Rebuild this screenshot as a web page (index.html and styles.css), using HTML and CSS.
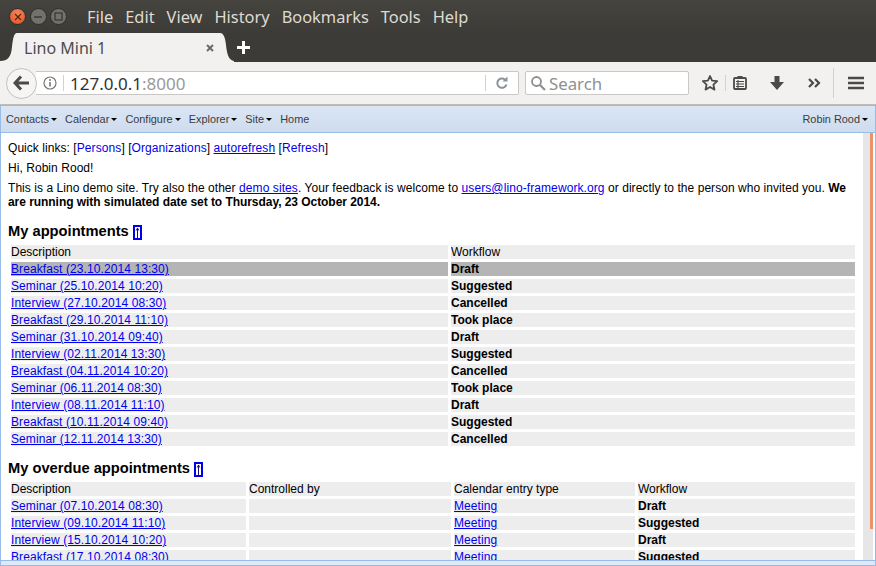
FILE: index.html
```html
<!DOCTYPE html>
<html lang="en">
<head>
<meta charset="UTF-8" />
<title>Lino Mini 1</title>
<link rel="stylesheet" href="styles.css">
</head>
<body>
<div class="titlebar">
	<div class="winbtns">
		<span class="winbtn close">
			<svg width="8" height="8" viewBox="0 0 8 8"><path d="M1 1l6 6M7 1l-6 6" stroke="#5a2412" stroke-width="1.3"/></svg>
		</span>
		<span class="winbtn">
			<svg width="8" height="8" viewBox="0 0 8 8"><path d="M0 4h8" stroke="#3a3a36" stroke-width="1.5"/></svg>
		</span>
		<span class="winbtn">
			<svg width="9" height="9" viewBox="0 0 9 9"><rect x="1" y="1" width="7" height="7" fill="none" stroke="#3a3a36" stroke-width="1.3"/></svg>
		</span>
	</div>
	<ul class="appmenu">
		<li>File</li>
		<li>Edit</li>
		<li>View</li>
		<li>History</li>
		<li>Bookmarks</li>
		<li>Tools</li>
		<li>Help</li>
	</ul>
</div>
<div class="tabstrip">
	<div class="tab">
		<svg class="flare" width="17" height="29" viewBox="0 0 17 29"><path d="M0 29V28C8 28 11 24 12 14 13 5 14 0 17 0V29z" fill="#f2f1ef"/></svg>
		<div class="tabmiddle">
			<span class="tabtitle">Lino Mini 1</span>
			<svg class="tabclose" width="8" height="8" viewBox="0 0 8 8"><path d="M1 1l6 6M7 1l-6 6" stroke="#6a6a6a" stroke-width="2"/></svg>
		</div>
		<svg class="flare" width="14" height="29" viewBox="0 0 14 29"><path d="M0 0C3 0 5 3 6 12 7 22 9 27 14 28V29H0z" fill="#f2f1ef"/></svg>
	</div>
	<svg class="newtab" width="13" height="13" viewBox="0 0 13 13"><path d="M6.500 0v13M0 6.500h13" stroke="#fff" stroke-width="3"/></svg>
</div>
<div class="navbar">
	<div class="backbtn">
		<svg width="17" height="16" viewBox="0 0 17 16"><path d="M8 1.500L2 8l6 6.500M2.500 8H16" fill="none" stroke="#4a4a4a" stroke-width="3"/></svg>
	</div>
	<div class="urlbar">
		<svg class="infoicon" width="14" height="14" viewBox="0 0 14 14"><circle cx="7" cy="7" r="6" fill="none" stroke="#777" stroke-width="1.2"/><path d="M7 6v4.500" stroke="#777" stroke-width="1.6"/><circle cx="7" cy="4" r="1" fill="#777"/></svg>
		<span class="urlsep"></span>
		<span class="url">127.0.0.1<span class="port">:8000</span></span>
		<span class="urlsep reloadsep"></span>
		<svg class="reload" width="14" height="14" viewBox="0 0 14 14"><path d="M11.500 8.500A4.700 4.700 0 1 1 10 3.500" fill="none" stroke="#8a939c" stroke-width="2"/><path d="M7.500 5.500H12.500V.5z" fill="#8a939c"/></svg>
	</div>
	<div class="searchbar">
		<svg width="16" height="16" viewBox="0 0 16 16"><circle cx="6.500" cy="6.500" r="4.500" fill="none" stroke="#8f8f8f" stroke-width="1.800"/><path d="M10 10l5 5" stroke="#8f8f8f" stroke-width="2.200"/></svg>
		<span class="searchtext">Search</span>
	</div>
	<div class="tools">
		<svg class="tool star" width="18" height="18" viewBox="0 0 18 18"><path d="M9 2l2.100 4.700 5.100.5-3.800 3.400 1.100 5L9 13l-4.500 2.600 1.100-5L1.800 7.200l5.100-.5z" fill="none" stroke="#4a4a4a" stroke-width="1.800" stroke-linejoin="round"/></svg>
		<span class="toolsep"></span>
		<svg class="tool clip" width="14" height="14" viewBox="0 0 14 14"><path d="M4.500 0h5v2h-5z" fill="#4a4a4a"/><rect x="1" y="2" width="12" height="11" rx="1" fill="none" stroke="#4a4a4a" stroke-width="1.800"/><path d="M3 5.500h8M3 8h8M3 10.500h8M5 4v8" stroke="#4a4a4a" stroke-width="1.100"/></svg>
		<svg class="tool down" width="16" height="16" viewBox="0 0 16 16"><path d="M5.500 1h5v6H15l-7 8-7-8h4.500z" fill="#4a4a4a"/></svg>
		<svg class="tool more" width="13" height="10" viewBox="0 0 13 10"><path d="M1 1l4 4-4 4M7 1l4 4-4 4" fill="none" stroke="#4a4a4a" stroke-width="2.200"/></svg>
		<span class="toolsep wide"></span>
		<svg class="tool burger" width="16" height="14" viewBox="0 0 16 14"><path d="M0 2h16M0 7h16M0 12h16" stroke="#4a4a4a" stroke-width="2.600"/></svg>
	</div>
</div>
<div class="menubar">
	<a class="menuitem arrow">Contacts</a>
	<a class="menuitem arrow">Calendar</a>
	<a class="menuitem arrow">Configure</a>
	<a class="menuitem arrow">Explorer</a>
	<a class="menuitem arrow">Site</a>
	<a class="menuitem">Home</a>
	<a class="menuitem arrow user">Robin Rood</a>
</div>
<div class="viewport">
	<div class="content">
		<p>Quick links: [<a class="plain" href="#">Persons</a>] [<a class="plain" href="#">Organizations</a>] <a href="#">autorefresh</a> [<a class="plain" href="#">Refresh</a>]</p>
		<p>Hi, Robin Rood!</p>
		<p>This is a Lino demo site. Try also the other <a href="#">demo sites</a>. Your feedback is welcome to <a href="#">users@lino-framework.org</a> or directly to the person who invited you. <b>We are running with simulated date set to Thursday, 23 October 2014.</b></p>

		<h2 class="firsthead">My appointments <a class="uplink" href="#"><svg width="5" height="11" viewBox="0 0 5 11"><path d="M2.500 11V1M1.200 3.500l1.300-2.500 1.300 2.500" fill="none" stroke="#101070" stroke-width="1"/></svg></a></h2>
		<table class="grid first">
			<tr><td class="c1">Description</td><td>Workflow</td></tr>
			<tr class="current"><td><a href="#">Breakfast (23.10.2014 13:30)</a></td><td><b>Draft</b></td></tr>
			<tr><td><a href="#">Seminar (25.10.2014 10:20)</a></td><td><b>Suggested</b></td></tr>
			<tr><td><a href="#">Interview (27.10.2014 08:30)</a></td><td><b>Cancelled</b></td></tr>
			<tr><td><a href="#">Breakfast (29.10.2014 11:10)</a></td><td><b>Took place</b></td></tr>
			<tr><td><a href="#">Seminar (31.10.2014 09:40)</a></td><td><b>Draft</b></td></tr>
			<tr><td><a href="#">Interview (02.11.2014 13:30)</a></td><td><b>Suggested</b></td></tr>
			<tr><td><a href="#">Breakfast (04.11.2014 10:20)</a></td><td><b>Cancelled</b></td></tr>
			<tr><td><a href="#">Seminar (06.11.2014 08:30)</a></td><td><b>Took place</b></td></tr>
			<tr><td><a href="#">Interview (08.11.2014 11:10)</a></td><td><b>Draft</b></td></tr>
			<tr><td><a href="#">Breakfast (10.11.2014 09:40)</a></td><td><b>Suggested</b></td></tr>
			<tr><td><a href="#">Seminar (12.11.2014 13:30)</a></td><td><b>Cancelled</b></td></tr>
		</table>

		<h2>My overdue appointments <a class="uplink" href="#"><svg width="5" height="11" viewBox="0 0 5 11"><path d="M2.500 11V1M1.200 3.500l1.300-2.500 1.300 2.500" fill="none" stroke="#101070" stroke-width="1"/></svg></a></h2>
		<table class="grid second">
			<tr><td class="c1">Description</td><td class="c2">Controlled by</td><td class="c3">Calendar entry type</td><td>Workflow</td></tr>
			<tr><td><a href="#">Seminar (07.10.2014 08:30)</a></td><td></td><td><a href="#">Meeting</a></td><td><b>Draft</b></td></tr>
			<tr><td><a href="#">Interview (09.10.2014 11:10)</a></td><td></td><td><a href="#">Meeting</a></td><td><b>Suggested</b></td></tr>
			<tr><td><a href="#">Interview (15.10.2014 10:20)</a></td><td></td><td><a href="#">Meeting</a></td><td><b>Draft</b></td></tr>
			<tr><td><a href="#">Breakfast (17.10.2014 08:30)</a></td><td></td><td><a href="#">Meeting</a></td><td><b>Suggested</b></td></tr>
		</table>
	</div>
	<div class="scrolltrack"><div class="scrollthumb"></div></div>
</div>
<div class="footerbar"></div>
</body>
</html>
```

FILE: styles.css
```css
* {
	box-sizing: border-box;
}

html, body {
	height: 100%;
	margin: 0;
	overflow: hidden;
}

body {
	display: flex;
	flex-direction: column;
	font: 12px/14px "Liberation Sans", Arial, sans-serif;
	color: #000;
	background: #fff;
}

/* browser chrome */
.titlebar {
	display: flex;
	align-items: center;
	flex: none;
	height: 33px;
	padding: 0 0 0 9px;
	background: linear-gradient(#45443f, #3c3b37);
}

.winbtns {
	display: flex;
	gap: 3.500px;
}

.winbtn {
	display: flex;
	align-items: center;
	justify-content: center;
	width: 17px;
	height: 17px;
	border-radius: 50%;
	background: #72716c;
	border: 1px solid #2f2e2b;
}

.winbtn.close {
	background: radial-gradient(circle at 50% 30%, #f4845a, #e2531f);
}

.appmenu {
	display: flex;
	gap: 12px;
	margin: 0 0 0 20px;
	padding: 0;
	list-style: none;
	font: 16.400px/20px "Noto Sans", "Open Sans", sans-serif;
	color: #dfdbd2;
}

.tabstrip {
	display: flex;
	align-items: flex-end;
	flex: none;
	height: 29px;
	background: #3c3b37;
}

.tab {
	display: flex;
	height: 29px;
}

.flare {
	display: block;
	flex: none;
}

.tabmiddle {
	display: flex;
	align-items: center;
	justify-content: space-between;
	width: 203px;
	padding: 0 6px 0 7px;
	background: #f2f1ef;
	font: 16px/20px "Noto Sans", "Open Sans", sans-serif;
	color: #4c4c4c;
}

.newtab {
	margin: 0 0 8px 3px;
}

.navbar {
	display: flex;
	align-items: center;
	flex: none;
	height: 43px;
	padding: 0 0 0 6px;
	background: #f2f1ef;
	border-bottom: 1px solid #bdbcb9;
}

.backbtn {
	display: flex;
	align-items: center;
	justify-content: center;
	position: relative;
	z-index: 1;
	flex: none;
	width: 31px;
	height: 31px;
	background: #f6f5f3;
	border: 1px solid #c2c1be;
	border-radius: 50%;
}

.urlbar {
	display: flex;
	align-items: center;
	width: 483px;
	height: 24px;
	margin-left: -1px;
	padding-left: 7px;
	background: #fff;
	border: 1px solid #c9c8c5;
	border-left: none;
	border-radius: 0 2px 2px 0;
	font: 17px/20px "Noto Sans", "Open Sans", sans-serif;
	color: #333;
}

.url {
	padding: 2px 0 0 1px;
}

.urlsep {
	width: 1px;
	height: 16px;
	margin: 0 5px 0 6px;
	background: #d2d1ce;
}

.port {
	color: #999;
}

.reloadsep {
	margin: 0 0 0 auto;
}

.reload {
	margin: 0 9px 0 9px;
}

.searchbar {
	display: flex;
	align-items: center;
	gap: 3px;
	width: 164px;
	height: 24px;
	margin-left: 6px;
	padding-left: 4px;
	background: #fff;
	border: 1px solid #c9c8c5;
	border-radius: 2px;
	font: 16.800px/20px "Noto Sans", "Open Sans", sans-serif;
	color: #909090;
}

.searchtext {
	padding-top: 2px;
}

.tools {
	display: flex;
	align-items: center;
	margin-left: 12px;
}

.toolsep {
	width: 1px;
	height: 16px;
	margin: 0 7px 0 6px;
	background: #d2d1ce;
}

.toolsep.wide {
	height: 30px;
	margin: 0 14px 0 12px;
}

.down {
	margin-left: 22px;
}

.more {
	margin-left: 23px;
}

/* lino main menu */
.menubar {
	display: flex;
	align-items: center;
	flex: none;
	height: 28px;
	padding: 0 7px 0 5px;
	background: linear-gradient(#dae6f4, #cfdcee);
	border: 1px solid #99bbe8;
	font-size: 10.900px;
	color: #333;
}

.menuitem {
	margin-right: 8.100px;
	color: #3b3b40;
}

.menuitem.arrow::after {
	content: "";
	display: inline-block;
	margin-left: 2px;
	vertical-align: 2px;
	border: 3px solid transparent;
	border-top-color: #000;
	border-bottom: none;
}

.menuitem.user {
	margin: 0 0 0 auto;
}

.viewport {
	display: flex;
	flex: 1;
	min-height: 0;
	overflow: hidden;
	border-left: 1px solid #99bbe8;
	border-right: 1px solid #99bbe8;
}

.content {
	flex: 1;
	min-width: 0;
	padding: 8px 7px 0 7px;
	overflow: hidden;
}

.content p {
	margin: 0 0 6px;
	letter-spacing: .05px;
}

.content p a {
	letter-spacing: .09px;
}

.content p b {
	letter-spacing: -.05px;
}

.content h2 {
	margin: 10px 0 2px;
	font-size: 14.700px;
	line-height: 18px;
}

.content h2.firsthead {
	margin-top: 13px;
}

a {
	color: #00e;
}

a.plain {
	text-decoration: none;
}

.uplink {
	display: inline-flex;
	align-items: center;
	justify-content: center;
	width: 9px;
	height: 15px;
	vertical-align: -2px;
	border: 2px solid #00e;
}

.grid {
	width: 850px;
	table-layout: fixed;
	border-collapse: separate;
	border-spacing: 3px;
}

.grid td {
	height: 14px;
	padding: 0;
	background: #ededed;
	white-space: nowrap;
	overflow: hidden;
}

.grid a {
	letter-spacing: .09px;
}

.first .c1 {
	width: 437px;
}

.second .c1 {
	width: 235px;
}

.second .c2 {
	width: 202px;
}

.second .c3 {
	width: 181px;
}

.grid .current td {
	background: #b5b5b5;
}

.scrolltrack {
	display: flex;
	justify-content: flex-end;
	flex: none;
	width: 10px;
	margin-right: 2px;
	background: #e6e6e6;
}

.scrollthumb {
	width: 3px;
	height: 396px;
	background: #ee9168;
}

.footerbar {
	flex: none;
	height: 6px;
	background: #dfe8f6;
	border: 1px solid #99bbe8;
}
```
